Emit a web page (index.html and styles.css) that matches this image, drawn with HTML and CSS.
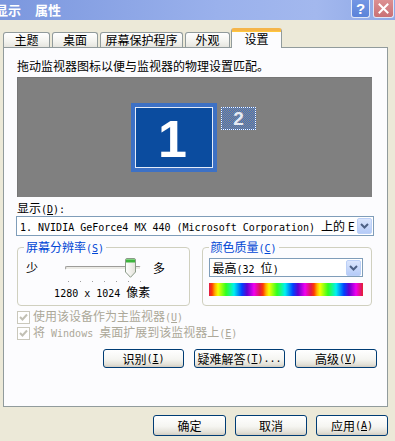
FILE: index.html
```html
<!DOCTYPE html>
<html>
<head>
<meta charset="utf-8">
<title>显示 属性</title>
<link rel="stylesheet" href="styles.css">
</head>
<body>
<div class="titlebar">
  <div class="title"><span>显示</span><span>属性</span></div>
  <div class="tbtns">
    <span class="tb help">?</span>
    <span class="tb close"><svg width="11" height="11" viewBox="0 0 11 11"><path d="M1.5 1.5 L9.5 9.5 M9.5 1.5 L1.5 9.5" stroke="#fff" stroke-width="2" stroke-linecap="square"/></svg></span>
  </div>
</div>

<div class="tabs">
  <div class="tab t1">主题</div>
  <div class="tab t2">桌面</div>
  <div class="tab t3">屏幕保护程序</div>
  <div class="tab t4">外观</div>
  <div class="tab sel">设置</div>
</div>

<div class="panel">
  <div class="hint">拖动监视器图标以便与监视器的物理设置匹配。</div>
  <div class="desk">
    <div class="m1"><span>1</span></div>
    <div class="m2">2</div>
  </div>
  <div class="lbl">显示<span class="m">(<u>D</u>):</span></div>
  <div class="combo wide">
    <span class="ctext"><span class="m">1. NVIDIA GeForce4 MX 440 (Microsoft Corporation) </span>上的 E</span>
    <span class="cbtn"><svg width="9" height="6" viewBox="0 0 9 6"><path d="M1 1 L4.5 4.5 L8 1" fill="none" stroke="#4d6185" stroke-width="2"/></svg></span>
  </div>
  <div class="groups">
    <div class="group res">
      <span class="legend">屏幕分辨率<span class="m">(<u>S</u>)</span></span>
      <div class="srow">
        <span>少</span>
        <div class="slider">
          <div class="track"></div>
          <div class="ticks"></div>
          <svg class="thumb" width="11" height="20" viewBox="0 0 11 20">
            <defs><linearGradient id="tg" x1="0" y1="0" x2="1" y2="0"><stop offset="0" stop-color="#ffffff"/><stop offset="1" stop-color="#e3e2da"/></linearGradient></defs>
            <path d="M0.5 2 Q0.5 0.5 2 0.5 H9 Q10.5 0.5 10.5 2 V14 L5.5 19.3 L0.5 14 Z" fill="url(#tg)" stroke="#8a9a88"/>
            <rect x="1" y="1" width="9" height="3.5" fill="#3cb43c"/>
            <rect x="1" y="1" width="9" height="1" fill="#7ed27e"/>
          </svg>
        </div>
        <span class="more">多</span>
      </div>
      <div class="restext"><span class="m">1280 x 1024 </span>像素</div>
    </div>
    <div class="group col">
      <span class="legend">颜色质量<span class="m">(<u>C</u>)</span></span>
      <div class="combo small">
        <span class="ctext">最高<span class="m">(32 </span>位<span class="m">)</span></span>
        <span class="cbtn"><svg width="9" height="6" viewBox="0 0 9 6"><path d="M1 1 L4.5 4.5 L8 1" fill="none" stroke="#4d6185" stroke-width="2"/></svg></span>
      </div>
      <div class="rainbow"></div>
    </div>
  </div>
  <div class="chk">
    <span class="cb"><svg width="11" height="11" viewBox="0 0 11 11"><path d="M2 5 L4.5 7.5 L9 2.5" fill="none" stroke="#c2c0b4" stroke-width="2"/></svg></span>
    <span>使用该设备作为主监视器<span class="m">(<u>U</u>)</span></span>
  </div>
  <div class="chk">
    <span class="cb"><svg width="11" height="11" viewBox="0 0 11 11"><path d="M2 5 L4.5 7.5 L9 2.5" fill="none" stroke="#c2c0b4" stroke-width="2"/></svg></span>
    <span>将<span class="m"> Windows </span>桌面扩展到该监视器上<span class="m">(<u>E</u>)</span></span>
  </div>
  <div class="btnrow">
    <div class="btn b1">识别<span class="m">(<u>I</u>)</span></div>
    <div class="btn b2">疑难解答<span class="m">(<u>T</u>)...</span></div>
    <div class="btn b3">高级<span class="m">(<u>V</u>)</span></div>
  </div>
</div>

<div class="footer">
  <div class="btn fb ok">确定</div>
  <div class="btn fb">取消</div>
  <div class="btn fb">应用<span class="m">(<u>A</u>)</span></div>
</div>
</body>
</html>
```

FILE: styles.css
```css
* { box-sizing: border-box; }
html, body { margin: 0; padding: 0; }
body {
  width: 395px;
  height: 441px;
  overflow: hidden;
  background: #ece9d8;
  font-family: "Noto Sans CJK SC", sans-serif;
  font-size: 12px;
  line-height: 12px;
  color: #000;
}
.m { font-family: "DejaVu Sans Mono", monospace; font-size: 10px; }
u { text-decoration: underline; text-underline-offset: 1px; }

.titlebar {
  height: 20px;
  display: flex;
  justify-content: space-between;
  background: linear-gradient(90deg, #7b97de 0%, #9ab1ec 55%, #a3b8ee 80%, #8ea8e6 100%);
}
.title {
  display: flex;
  gap: 14px;
  margin-left: -5px;
  color: #fff;
  font-weight: bold;
  font-size: 13px;
  line-height: 20px;
  height: 20px;
}
.tbtns { display: flex; gap: 3px; margin-right: 1px; }
.tb {
  height: 18px;
  border: 1px solid #dfe6f7;
  border-top: none;
  border-radius: 0 0 3px 3px;
  display: flex;
  align-items: center;
  justify-content: center;
  color: #fff;
}
.help {
  width: 19px;
  background: linear-gradient(#7396e4, #5b83d9);
  font-family: "Liberation Sans", sans-serif;
  font-weight: bold;
  font-size: 15px;
}
.close {
  width: 21px;
  background: linear-gradient(#dc9092, #c97175);
}

.tabs {
  display: flex;
  align-items: flex-end;
  margin-top: 8px;
  padding-left: 3px;
  height: 19px;
  position: relative;
  z-index: 1;
}
.tab {
  height: 15px;
  border: 1px solid #919b9c;
  border-bottom: none;
  border-radius: 3px 3px 0 0;
  background: linear-gradient(#ffffff, #f3f3ef 60%, #e6e5df);
  margin-right: 2px;
  text-align: center;
  line-height: 14px;
}
.t1 { width: 47px; }
.t2 { width: 46px; }
.t3 { width: 83px; }
.t4 { width: 45px; margin-right: 1px; }
.tab.sel {
  width: 51px;
  height: 20px;
  margin-bottom: -1px;
  margin-right: 0;
  background: #fcfcfe;
  border-top: 3px solid #f5b54a;
  box-shadow: inset 0 1px 0 #ffc73c;
  line-height: 15px;
  padding-bottom: 2px;
}

.panel {
  margin-left: 3px;
  width: 385px;
  height: 360px;
  border: 1px solid #919b9c;
  background: #fcfcfe;
  padding: 12px 15px 0 13px;
}
.hint { height: 12px; }
.desk {
  position: relative;
  margin-top: 5px;
  height: 120px;
  background: #808080;
  border-top: 1px solid #767676;
  border-left: 1px solid #767676;
}
.m1 {
  position: absolute;
  left: 113px;
  top: 25px;
  width: 86px;
  height: 69px;
  border: 4px solid #3d71c5;
  background: #0b4c9f;
  box-shadow: inset 0 0 0 1px #e4ecf9;
  display: flex;
  align-items: center;
  justify-content: center;
  color: #fff;
  font-family: "Liberation Sans", sans-serif;
  font-weight: bold;
  font-size: 52px;
  line-height: 52px;
}
.m1 span { margin-top: 2px; margin-left: -3px; }
.m2 {
  position: absolute;
  left: 203px;
  top: 29px;
  width: 35px;
  height: 23px;
  border: 1px dotted #ffffff;
  background-color: #6c7a90;
  background-image: repeating-conic-gradient(#3f6fc0 0 25%, #8a8a8a 0 50%);
  background-size: 2px 2px;
  color: #e6eaf2;
  font-family: "Liberation Sans", sans-serif;
  font-weight: bold;
  font-size: 19px;
  line-height: 21px;
  text-align: center;
}
.lbl { margin-top: 5px; height: 12px; }

.combo {
  display: flex;
  align-items: center;
  justify-content: space-between;
  background: #fff;
  border: 1px solid #7f9db9;
  overflow: hidden;
  white-space: nowrap;
}
.combo .ctext { padding-left: 3px; overflow: hidden; line-height: 16px; height: 16px; }
.cbtn {
  flex: none;
  width: 15px;
  height: 16px;
  margin-right: 1px;
  border: 1px solid #bcd0f7;
  border-radius: 2px;
  background: linear-gradient(#dbe6fd, #b5cbf8);
  display: flex;
  align-items: center;
  justify-content: center;
}
.wide { margin-top: 2px; height: 20px; margin-left: -1px; margin-right: -2px; }
.wide .ctext { width: 340px; }
.small { width: 154px; height: 19px; }
.small .cbtn { height: 16px; }

.groups {
  display: flex;
  gap: 12px;
  margin-top: 11px;
}
.group {
  position: relative;
  height: 59px;
  border: 1px solid #d0d0bf;
  border-radius: 4px;
}
.legend {
  position: absolute;
  left: 6px;
  top: -8px;
  padding: 0 2px;
  background: #fcfcfe;
  color: #0046d5;
  line-height: 13px;
}
.res { width: 173px; padding: 10px 0 0 8px; }
.col { width: 171px; padding: 10px 0 0 6px; }
.srow { display: flex; align-items: center; height: 20px; }
.slider { position: relative; width: 76px; height: 20px; margin-left: 27px; }
.track {
  position: absolute;
  left: 0;
  right: 0;
  top: 8px;
  height: 4px;
  border: 1px solid #9d9c99;
  border-right-color: #fff;
  border-bottom-color: #fff;
  background: #ecebe6;
  border-radius: 2px;
}
.ticks {
  position: absolute;
  left: 3px;
  top: 23px;
  width: 74px;
  height: 1px;
  background-image: linear-gradient(90deg, #a0a0a0 1px, transparent 1px);
  background-size: 12px 1px;
}
.thumb { position: absolute; left: 60px; top: 0; }
.more { margin-left: 12px; }
.restext { margin-top: 8px; text-align: center; padding-right: 10px; }
.rainbow {
  margin-top: 6px;
  width: 154px;
  height: 13px;
  background: repeating-linear-gradient(90deg, #e01a4a 0, #ff3a00 3px, #ffb000 6px, #f4ff00 9px, #30ff20 17px, #00f0f0 25px, #0040ff 33px, #6000d0 38px, #f000f0 45px, #e01a4a 51px);
}

.chk {
  display: flex;
  align-items: center;
  height: 16px;
  color: #aca899;
}
.groups + .chk { margin-top: 3px; }
.cb {
  width: 13px;
  height: 13px;
  margin-right: 3px;
  border: 1px solid #cac8bb;
  background: #fff;
  display: flex;
  align-items: center;
  justify-content: center;
}

.btn {
  height: 19px;
  border: 1px solid #003c74;
  border-radius: 3px;
  background: linear-gradient(#ffffff, #f5f5f1 55%, #e3e1d8 85%, #d2cec2);
  box-shadow: inset 0 -1px 0 #d6d0c5;
  display: flex;
  align-items: center;
  justify-content: center;
}
.btnrow {
  display: flex;
  justify-content: flex-end;
  gap: 10px;
  margin-top: 8px;
  margin-right: -5px;
}
.b1 { width: 81px; }
.b2 { width: 91px; }
.b3 { width: 82px; }

.footer {
  display: flex;
  justify-content: flex-end;
  gap: 9px;
  padding: 8px 7px 0 0;
}
.fb { width: 72px; height: 21px; }
.fb.ok { width: 73px; }
```
